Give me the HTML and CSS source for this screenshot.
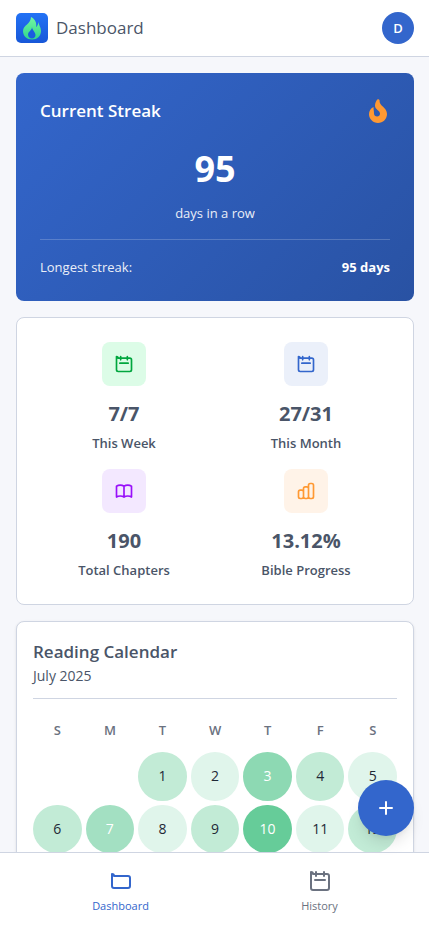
FILE: index.html
```html
<!DOCTYPE html>
<html lang="en">
<head>
<meta charset="utf-8">
<meta name="viewport" content="width=device-width, initial-scale=1">
<title>Dashboard</title>
<link rel="stylesheet" href="styles.css">
</head>
<body>
<svg class="sprite" aria-hidden="true">
  <symbol id="calendar" viewBox="0 0 24 24">
    <path d="M8 7V3m8 4V3m-9 8h10M3 3v16a2 2 0 0 0 2 2h14a2 2 0 0 0 2-2V7a2 2 0 0 0-2-2H5a2 2 0 0 0-2-2z"/>
  </symbol>
</svg>
<div class="app">
  <header class="topbar">
    <svg class="logo" viewBox="0 0 32 30" aria-hidden="true">
      <defs>
        <linearGradient id="tile" x1="0" y1="0" x2="0" y2="1"><stop offset="0" stop-color="#2372f5"/><stop offset="1" stop-color="#1757d8"/></linearGradient>
        <linearGradient id="flame" x1="0" y1="0" x2="0" y2="1"><stop offset="0" stop-color="#74f7a0"/><stop offset="1" stop-color="#2fd58d"/></linearGradient>
      </defs>
      <rect width="32" height="30" rx="5" fill="url(#tile)"/>
      <path d="M15 4c4 2 6 6 5 10 1.500-1 2-2.500 2.500-5 0 3 2.500 5 2.500 9 0 5-4 8.500-9 8.500S7 23 7 18c0-6 8-7 8-14z" fill="url(#flame)"/>
      <path d="M16 14c0 3 3.500 5 3.500 8 0 2-1.500 3.500-3.500 3.500S12 24 12 21.500c0-3 4-4 4-7.500z" fill="#1a5cdf"/>
    </svg>
    <h1 class="topbar-title">Dashboard</h1>
    <button class="avatar" type="button" aria-label="Account">D</button>
  </header>

  <main class="content">
    <section class="streak">
      <div class="streak-head">
        <h2 class="streak-title">Current Streak</h2>
        <svg class="streak-icon" viewBox="0 0 24 24" aria-hidden="true">
          <path d="M12 0c-2 1.500-3 4-3 6.500 0 4.500 5 4.500 5 8.300 0 1.500-1.200 2.700-2.900 2.700S8 16.300 8 14.500C8 12 7.500 11 7.500 8 4.500 9.500 3 12 3 15.300 3 20 7 24 12 24s9-4 9-9c0-7-8-7.500-7.500-14z"/>
        </svg>
      </div>
      <p class="streak-count">95</p>
      <p class="streak-unit">days in a row</p>
      <div class="streak-foot"><span>Longest streak:</span><strong>95 days</strong></div>
    </section>

    <section class="card stats">
      <div class="stat">
        <span class="stat-icon green"><svg class="icon" viewBox="0 0 24 24" aria-hidden="true"><use href="#calendar"/></svg></span>
        <strong class="stat-value">7/7</strong><span class="stat-label">This Week</span>
      </div>
      <div class="stat">
        <span class="stat-icon blue"><svg class="icon" viewBox="0 0 24 24" aria-hidden="true"><use href="#calendar"/></svg></span>
        <strong class="stat-value">27/31</strong><span class="stat-label">This Month</span>
      </div>
      <div class="stat">
        <span class="stat-icon purple"><svg class="icon" viewBox="0 0 24 24" aria-hidden="true"><path d="M12 6.253v13m0-13C10.832 5.477 9.246 5 7.500 5S4.168 5.477 3 6.253v13C4.168 18.477 5.754 18 7.500 18s3.332.477 4.500 1.253m0-13C13.168 5.477 14.754 5 16.500 5c1.747 0 3.332.477 4.500 1.253v13C19.832 18.477 18.247 18 16.500 18c-1.746 0-3.332.477-4.500 1.253"/></svg></span>
        <strong class="stat-value">190</strong><span class="stat-label">Total Chapters</span>
      </div>
      <div class="stat">
        <span class="stat-icon orange"><svg class="icon" viewBox="0 0 24 24" aria-hidden="true"><path d="M9 19v-6a2 2 0 0 0-2-2H5a2 2 0 0 0-2 2v6a2 2 0 0 0 2 2h2a2 2 0 0 0 2-2zm0 0V9a2 2 0 0 1 2-2h2a2 2 0 0 1 2 2v10m-6 0a2 2 0 0 0 2 2h2a2 2 0 0 0 2-2m0 0V5a2 2 0 0 1 2-2h2a2 2 0 0 1 2 2v14a2 2 0 0 1-2 2h-2a2 2 0 0 1-2-2z"/></svg></span>
        <strong class="stat-value">13.12%</strong><span class="stat-label">Bible Progress</span>
      </div>
    </section>

    <section class="card calendar">
      <header class="calendar-head">
        <h2 class="calendar-title">Reading Calendar</h2>
        <p class="calendar-month">July 2025</p>
      </header>
      <table class="days">
        <thead><tr><th>S</th><th>M</th><th>T</th><th>W</th><th>T</th><th>F</th><th>S</th></tr></thead>
        <tbody>
          <tr><td></td><td></td><td class="l2">1</td><td class="l1">2</td><td class="l4">3</td><td class="l2">4</td><td class="l1">5</td></tr>
          <tr><td class="l2">6</td><td class="l3">7</td><td class="l1">8</td><td class="l2">9</td><td class="l5">10</td><td class="l1">11</td><td class="l2">12</td></tr>
        </tbody>
      </table>
    </section>
  </main>

  <button class="fab" type="button" aria-label="Add reading"><svg class="icon fab-icon" viewBox="0 0 24 24" aria-hidden="true"><path d="M12 6v12M6 12h12"/></svg></button>

  <nav class="tabs">
    <a class="tab active" href="#dashboard"><svg class="icon tab-icon" viewBox="0 0 24 24" aria-hidden="true"><path d="M3 7v10a2 2 0 0 0 2 2h14a2 2 0 0 0 2-2V9a2 2 0 0 0-2-2H5a2 2 0 0 0-2-2z"/></svg>Dashboard</a>
    <a class="tab" href="#history"><svg class="icon tab-icon" viewBox="0 0 24 24" aria-hidden="true"><use href="#calendar"/></svg>History</a>
  </nav>
</div>
</body>
</html>
```
FILE: styles.css
```css
* { box-sizing: border-box; }
body, h1, h2, p { margin: 0; }
body {
  font-family: "Open Sans", "Noto Sans", sans-serif;
  font-size: 13px;
  line-height: 20px;
  color: #4a5568;
  background: #f6f7fb;
}
button { border: 0; padding: 0; font: inherit; cursor: pointer; }
.sprite { position: absolute; width: 0; height: 0; }
.app { position: relative; display: flex; flex-direction: column; height: 100vh; }
.icon {
  width: 20px;
  height: 20px;
  fill: none;
  stroke: currentColor;
  stroke-width: 2;
  stroke-linecap: round;
  stroke-linejoin: round;
}

.topbar {
  display: flex;
  align-items: center;
  gap: 8px;
  padding: 12px 15px 12px 16px;
  background: #fff;
  border-bottom: 1px solid #cfd5e2;
}
.logo { width: 32px; height: 30px; }
.topbar-title { flex: 1; font-size: 17px; line-height: 28px; font-weight: 500; }
.avatar {
  width: 32px;
  height: 32px;
  border-radius: 50%;
  background: #3366cc;
  color: #fff;
  font-weight: 600;
}

.content {
  flex: 1;
  min-height: 0;
  padding: 16px 15px 16px 16px;
  overflow-y: auto;
  scrollbar-width: none;
}
.streak {
  padding: 24px;
  border-radius: 8px;
  background: linear-gradient(135deg, #3366cc, #2952a3);
  color: #fff;
  text-align: center;
}
.streak-head { display: flex; justify-content: space-between; align-items: center; height: 28px; }
.streak-title { font-size: 17px; line-height: 28px; font-weight: 600; }
.streak-icon { width: 24px; height: 24px; fill: #ff9933; }
.streak-count { margin-top: 24px; font-size: 36px; line-height: 40px; font-weight: 700; }
.streak-unit { margin-top: 14px; opacity: .9; }
.streak-foot {
  display: flex;
  justify-content: space-between;
  margin-top: 16px;
  padding-top: 17px;
  border-top: 1px solid rgba(255, 255, 255, .2);
}
.streak-foot span { opacity: .9; }
.streak-foot strong { font-weight: 700; }

.card {
  margin-top: 16px;
  background: #fff;
  border: 1px solid #cfd5e2;
  border-radius: 8px;
}
.stats { display: grid; grid-template-columns: 1fr 1fr; gap: 16px; padding: 24px; }
.stat { display: flex; flex-direction: column; align-items: center; }
.stat-icon { display: flex; padding: 12px; margin-bottom: 12px; border-radius: 8px; }
.green { background: #dcfce7; color: #00a63e; }
.blue { background: #ebf0fa; color: #3366cc; }
.purple { background: #f3e8ff; color: #9810fa; }
.orange { background: #fff3e8; color: #ff9933; }
.stat-value { font-size: 20px; line-height: 32px; font-weight: 700; }
.stat-label { margin-top: 3px; font-weight: 600; }

.calendar { padding: 16px; box-shadow: 0 1px 3px rgba(0, 0, 0, .1); }
.calendar-head { padding-bottom: 12px; border-bottom: 1px solid #cfd5e2; }
.calendar-title { font-size: 17px; line-height: 28px; font-weight: 600; }
.calendar-month { font-size: 14px; }
.days { display: grid; gap: 7px; margin-top: 16px; }
.days tbody { display: grid; gap: 4px; }
.days thead { display: grid; }
.days tr { display: grid; grid-template-columns: repeat(7, 1fr); gap: 4px; }
.days th { padding: 5px 0; font-weight: 600; color: #6b7280; }
.days td {
  display: flex;
  align-items: center;
  justify-content: center;
  aspect-ratio: 1;
  padding: 0;
  border-radius: 50%;
  font-size: 14px;
  color: #1f2937;
}
.days .l1 { background: #e0f5eb; }
.days .l2 { background: #c2ebd6; }
.days .l3 { background: #a3e0c2; color: #fff; }
.days .l4 { background: #8dd9b3; color: #fff; }
.days .l5 { background: #66cc99; color: #fff; }

.fab {
  position: absolute;
  right: 15px;
  bottom: 94px;
  display: flex;
  align-items: center;
  justify-content: center;
  width: 56px;
  height: 56px;
  border-radius: 50%;
  background: #3366cc;
  color: #fff;
  box-shadow: 0 10px 15px -3px rgba(0, 0, 0, .1), 0 4px 6px -4px rgba(0, 0, 0, .1);
}
.fab-icon { width: 24px; height: 24px; }

.tabs {
  display: flex;
  justify-content: space-around;
  padding: 16px 15px 16px 16px;
  background: #fff;
  border-top: 1px solid #cfd5e2;
}
.tab {
  display: flex;
  flex-direction: column;
  align-items: center;
  gap: 4px;
  font-size: 11px;
  line-height: 17px;
  color: #6b7280;
  text-decoration: none;
}
.tab.active { color: #3366cc; }
.tab-icon { width: 24px; height: 24px; }
```
